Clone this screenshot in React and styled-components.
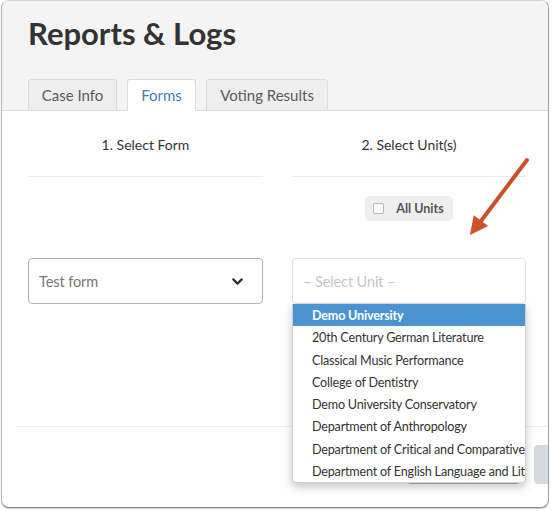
import styled, { createGlobalStyle } from "styled-components";
import { ChevronDown } from "lucide-react";

const Global = createGlobalStyle`
  body {
    margin: 0;
    background: #fff;
    font-family: Lato, "Open Sans", sans-serif;
  }
`;

const Page = styled.div`
  position: relative;
  width: 552px;
  height: 511px;
`;

const Card = styled.div`
  margin-left: 1px;
  width: 548px;
  height: 508px;
  box-sizing: border-box;
  border: 1px solid #d4d4d4;
  border-bottom-color: #8c8c8c;
  border-left-color: #b4b4b4;
  border-right-color: #a0a0a0;
  border-radius: 8px;
  box-shadow: 0 1px 1px rgba(0, 0, 0, 0.2);
  overflow: hidden;
  background: #fff;
`;

const Header = styled.div`
  background: #f4f4f4;
  padding: 14px 0 0 26px;
  border-bottom: 1px solid #dcdcdc;
`;

const Title = styled.h1`
  margin: 0;
  font-family: Lato, sans-serif;
  font-weight: 700;
  font-size: 31px;
  line-height: 37px;
  color: #333;
`;

const Tabs = styled.div`
  display: flex;
  gap: 10px;
  margin-top: 27px;
  margin-bottom: -1px;
`;

const Tab = styled.div`
  width: ${(p) => p.w}px;
  height: 32px;
  box-sizing: border-box;
  display: flex;
  align-items: center;
  justify-content: center;
  font-size: 15px;
  color: ${(p) => (p.active ? "#3f7fb3" : "#5a5a5a")};
  background: ${(p) => (p.active ? "#fff" : "#eeeeee")};
  border: 1px solid #dcdcdc;
  border-bottom-color: ${(p) => (p.active ? "#fff" : "#dcdcdc")};
  border-radius: 3px 3px 0 0;
`;

const Body = styled.div`
  padding: 0 26px;
`;

const Grid = styled.div`
  display: grid;
  grid-template-columns: 235px 234px;
  column-gap: 29px;
`;

const ColHead = styled.div`
  padding: 24px 0 21px;
  border-bottom: 1px solid #ececec;
  text-align: center;
  font-size: 14px;
  line-height: 20px;
  color: #333;
`;

const PillRow = styled.div`
  display: flex;
  justify-content: center;
  padding-top: 19px;
`;

const Pill = styled.div`
  display: flex;
  align-items: center;
  gap: 12px;
  height: 25px;
  padding: 0 9px 0 8px;
  background: #efefef;
  border-radius: 5px;
  font-size: 12.5px;
  font-weight: 700;
  color: #555;
`;

const Check = styled.span`
  width: 11px;
  height: 11px;
  box-sizing: border-box;
  border: 1px solid #b8b8b8;
  border-radius: 2px;
  background: #fafafa;
`;

const SelectCell = styled.div`
  position: relative;
  margin-top: ${(p) => p.top}px;
`;

const SelectBox = styled.div`
  height: 46px;
  box-sizing: border-box;
  display: flex;
  align-items: center;
  justify-content: space-between;
  padding: 0 16px 0 10px;
  border: 1px solid ${(p) => (p.focus ? "#a8b2be" : "#dedede")};
  border-radius: 4px;
  font-size: 14.5px;
  letter-spacing: -0.1px;
  color: ${(p) => (p.placeholder ? "#c6c6c6" : "#777")};
`;

const Menu = styled.ul`
  position: absolute;
  top: 46px;
  left: 0;
  width: 234px;
  box-sizing: border-box;
  margin: 0;
  padding: 0;
  list-style: none;
  background: #fff;
  border: 1px solid #cfcfcf;
  border-top: none;
  border-radius: 0 0 4px 4px;
  box-shadow: 0 4px 10px rgba(0, 0, 0, 0.22);
  overflow: hidden;
  z-index: 2;
`;

const Item = styled.li`
  height: 22.3px;
  line-height: 23px;
  padding-left: 19px;
  white-space: nowrap;
  overflow: hidden;
  font-size: 12.6px;
  letter-spacing: -0.2px;
  font-weight: ${(p) => (p.selected ? 700 : 400)};
  color: ${(p) => (p.selected ? "#fff" : "#333")};
  background: ${(p) => (p.selected ? "#4b93d1" : "transparent")};
`;

const Footer = styled.div`
  display: flex;
  justify-content: flex-end;
  gap: 14px;
  margin: 122px -112px 0 -12px;
  padding-top: 18px;
  border-top: 1px solid #ececec;
`;

const Button = styled.div`
  height: 39px;
  width: ${(p) => p.w}px;
  box-sizing: border-box;
  display: flex;
  align-items: center;
  padding-left: 14px;
  border-radius: 4px;
  background: ${(p) => (p.grey ? "#d6d9de" : "#9ebbd8")};
`;

const ButtonMark = styled.span`
  width: 2px;
  height: 12px;
  background: #fff;
`;

const ArrowSvg = styled.svg`
  position: absolute;
  left: 0;
  top: 0;
  pointer-events: none;
  z-index: 3;
`;

const units = [
  "Demo University",
  "20th Century German Literature",
  "Classical Music Performance",
  "College of Dentistry",
  "Demo University Conservatory",
  "Department of Anthropology",
  "Department of Critical and Comparative",
  "Department of English Language and Literature",
];

function App() {
  return (
    <Page>
      <Global />
      <Card>
        <Header>
          <Title>Reports &amp; Logs</Title>
          <Tabs>
            <Tab w={89}>Case Info</Tab>
            <Tab w={69} active>
              Forms
            </Tab>
            <Tab w={122}>Voting Results</Tab>
          </Tabs>
        </Header>
        <Body>
          <Grid>
            <ColHead>1. Select Form</ColHead>
            <ColHead>2. Select Unit(s)</ColHead>
            <div />
            <PillRow>
              <Pill>
                <Check />
                All Units
              </Pill>
            </PillRow>
            <SelectCell top={37}>
              <SelectBox focus>
                Test form
                <ChevronDown size={17} strokeWidth={3.2} color="#333" />
              </SelectBox>
            </SelectCell>
            <SelectCell top={37}>
              <SelectBox placeholder="true">– Select Unit –</SelectBox>
              <Menu>
                {units.map((u, i) => (
                  <Item key={u} selected={i === 0}>
                    {u}
                  </Item>
                ))}
              </Menu>
            </SelectCell>
          </Grid>
          <Footer>
            <Button w={113} />
            <Button w={100} grey>
              <ButtonMark />
            </Button>
          </Footer>
        </Body>
      </Card>
      <ArrowSvg width="552" height="511" viewBox="0 0 552 511">
        <line
          x1="527"
          y1="160"
          x2="481"
          y2="221"
          stroke="#c9512c"
          strokeWidth="4"
          strokeLinecap="round"
        />
        <polygon points="470,235 473.7,215.3 488.1,226.1" fill="#c9512c" />
      </ArrowSvg>
    </Page>
  );
}

export default App;
